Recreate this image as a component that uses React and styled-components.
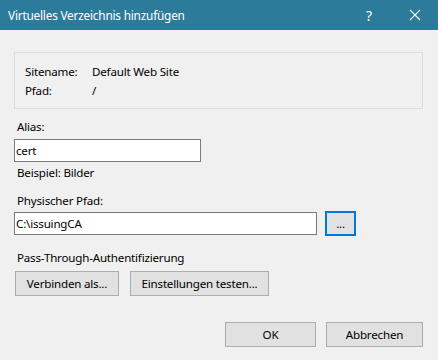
import React from "react";
import styled, { createGlobalStyle } from "styled-components";

const Global = createGlobalStyle`
  html, body { margin: 0; padding: 0; background: #f0f0f0; }
  body { font-family: "Noto Sans", "Open Sans", sans-serif; font-size: 11.6px; letter-spacing: -0.2px; color: #000; }
  * { box-sizing: border-box; }
`;

const Window = styled.div`
  width: 438px;
  height: 360px;
  background: #f0f0f0;
  display: flex;
  flex-direction: column;
`;

const TitleBar = styled.div`
  height: 30px;
  background: #2d7b9a;
  color: #fff;
  display: flex;
  align-items: center;
  padding-left: 8px;
  font-size: 11.8px;
`;

const Title = styled.div`
  flex: 1;
`;

const TitleButton = styled.div`
  width: 46px;
  height: 30px;
  display: flex;
  align-items: center;
  justify-content: center;
  font-size: 14px;
`;

const Body = styled.div`
  padding: 22px 15px 0 14px;
  display: flex;
  flex-direction: column;
`;

const GroupBox = styled.div`
  height: 57px;
  border: 1px solid #dcdcdc;
  padding: 9px 0 0 10px;
  display: grid;
  grid-template-columns: 67px 1fr;
  grid-auto-rows: 19px;
  align-items: center;
`;

const Label = styled.div`
  line-height: 16px;
  height: 16px;
  padding-left: 3px;
  margin-top: ${(p) => p.$mt || 0}px;
  margin-bottom: ${(p) => p.$mb || 0}px;
  white-space: nowrap;
`;

const TextBox = styled.div`
  width: ${(p) => p.$w}px;
  height: 23px;
  border: 1px solid #7a7a7a;
  background: #fff;
  padding-left: 1px;
  display: flex;
  align-items: center;
`;

const Row = styled.div`
  display: flex;
  align-items: center;
  gap: ${(p) => p.$gap || 0}px;
  margin-left: ${(p) => p.$ml || 0}px;
  margin-top: ${(p) => p.$mt || 0}px;
  justify-content: ${(p) => p.$justify || "flex-start"};
`;

const Button = styled.div`
  width: ${(p) => p.$w}px;
  height: 25px;
  border: ${(p) => (p.$focused ? "2px solid #0078d7" : "1px solid #adadad")};
  background: #e1e1e1;
  display: flex;
  align-items: center;
  justify-content: center;
  white-space: nowrap;
`;

const CloseIcon = () => (
  <svg width="12" height="12" viewBox="0 0 12 12">
    <path d="M1 1 L11 11 M11 1 L1 11" stroke="#fff" strokeWidth="1.1" fill="none" />
  </svg>
);

export default function App() {
  return (
    <>
      <Global />
      <Window>
        <TitleBar>
          <Title>Virtuelles Verzeichnis hinzufügen</Title>
          <TitleButton>?</TitleButton>
          <TitleButton>
            <CloseIcon />
          </TitleButton>
        </TitleBar>
        <Body>
          <GroupBox>
            <div>Sitename:</div>
            <div>Default Web Site</div>
            <div>Pfad:</div>
            <div>/</div>
          </GroupBox>
          <Label $mt={10} $mb={4}>Alias:</Label>
          <TextBox $w={187}>cert</TextBox>
          <Label $mt={3}>Beispiel: Bilder</Label>
          <Label $mt={12} $mb={2}>Physischer Pfad:</Label>
          <Row $gap={8}>
            <TextBox $w={303}>C:\issuingCA</TextBox>
            <Button $w={31} $focused>...</Button>
          </Row>
          <Label $mt={14} $mb={5}>Pass-Through-Authentifizierung</Label>
          <Row $gap={11} $ml={1}>
            <Button $w={104}>Verbinden als...</Button>
            <Button $w={139}>Einstellungen testen...</Button>
          </Row>
          <Row $gap={10} $mt={26} $justify="flex-end">
            <Button $w={91}>OK</Button>
            <Button $w={97}>Abbrechen</Button>
          </Row>
        </Body>
      </Window>
    </>
  );
}
